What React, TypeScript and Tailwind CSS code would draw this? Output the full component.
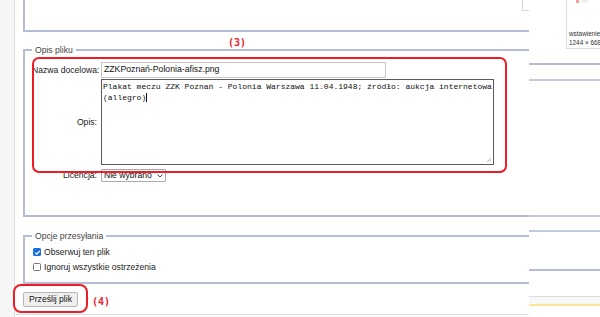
import React from 'react';

const line = 'border-[#b4bdd5]';

const Check: React.FC<{ on?: boolean }> = ({ on }) =>
  on ? (
    <span className="w-[8px] h-[8px] rounded-[1.5px] bg-[#1a6fe0] flex items-center justify-center">
      <svg width="7" height="7" viewBox="0 0 10 10">
        <path d="M1.8 5.2 4 7.4 8.3 2.6" fill="none" stroke="#fff" strokeWidth="1.8" />
      </svg>
    </span>
  ) : (
    <span className="w-[8px] h-[8px] rounded-[1.5px] border border-[#767676] bg-white" />
  );

const App: React.FC = () => {
  return (
    <div className="relative w-[600px] h-[317px] overflow-hidden bg-white flex font-['Liberation_Sans',Arial,sans-serif] text-[#222]">
      {/* lewy pasek */}
      <div className="w-[15px] h-full bg-[#f6f6f6] border-r border-[#dcdcdc]" />

      {/* formularz */}
      <div className="w-[514px] h-[315px] border-b border-[#dedede] overflow-hidden pl-[8px]">
        <div className={`relative w-[530px] h-[32px] border-l-2 border-r-2 border-b-2 ${line}`}>
          <div className="absolute right-[22px] top-0 w-[7px] h-[11px] border-l border-b border-[#d6d6d6] bg-white" />
        </div>

        <fieldset className={`w-[530px] mt-[13px] border-2 ${line} px-[7px] pb-[33px]`}>
          <legend className="px-[3px] text-[8.6px] leading-[10px] text-[#444]">Opis pliku</legend>
          <div className="grid grid-cols-[65px_auto] gap-x-[4px] items-center pt-[7px] text-[8.6px]">
            <span className="text-right whitespace-nowrap">Nazwa docelowa:</span>
            <div className="w-[285px] h-[16px] border border-[#c8c8c8] pl-[2px] flex items-center text-[8.7px] text-[#111]">
              ZZKPoznań-Polonia-afisz.png
            </div>

            <span className="text-right mt-[1px]">Opis:</span>
            <div className="relative mt-[1px] w-[393px] h-[86px] border border-[#5a5a5a] px-[1px] pt-[1px] font-['Liberation_Mono',monospace] text-[8px] leading-[11px] text-[#111]">
              Plakat meczu ZZK Poznań - Polonia Warszawa 11.04.1948; źródło: aukcja internetowa
              <br />
              (allegro)<span className="inline-block w-[1px] h-[9px] bg-[#111] align-middle" />
              <svg className="absolute right-[1px] bottom-[1px]" width="6" height="6" viewBox="0 0 6 6">
                <path d="M1 5 5 1M3 5 5 3" stroke="#aaa" strokeWidth="0.8" />
              </svg>
            </div>

            <span className="text-right mt-[4px]">Licencja:</span>
            <div className="mt-[4px] w-[65px] h-[13px] border border-[#aaa] rounded-[1px] flex items-center justify-between px-[2px] text-[8.6px] text-[#111]">
              Nie wybrano
              <svg width="6" height="4" viewBox="0 0 6 4">
                <path d="M0.5 0.5 3 3 5.5 0.5" fill="none" stroke="#333" strokeWidth="0.9" />
              </svg>
            </div>
          </div>
        </fieldset>

        <fieldset className={`w-[530px] mt-[14px] border-2 ${line} px-[7px] pb-[10px]`}>
          <legend className="px-[3px] text-[8.6px] leading-[10px] text-[#444]">Opcje przesyłania</legend>
          <div className="flex flex-col gap-[5px] pt-[6px] pl-[1px] text-[8.6px] leading-[10px]">
            <label className="flex items-center gap-[3px]">
              <Check on />
              Obserwuj ten plik
            </label>
            <label className="flex items-center gap-[3px]">
              <Check />
              Ignoruj wszystkie ostrzeżenia
            </label>
          </div>
        </fieldset>

        <button className="mt-[8px] w-[55px] h-[15px] border border-[#b5b5b5] rounded-[2px] bg-[#efefef] text-[8.6px] text-[#111] leading-none">
          Prześlij plik
        </button>
      </div>

      {/* prawy panel */}
      <div className="w-[71px] h-full flex flex-col bg-white">
        <div className="h-[49px] flex justify-end">
          <div className="w-[34px] h-[49px] border-l border-b border-[#dcdcdc] flex flex-col pl-[2px] text-[6.4px] leading-[9px] text-[#333] overflow-hidden">
            <div className="flex gap-[3px] h-[4px]">
              <span className="ml-[7px] w-[3px] h-[3px] bg-[#f3a0a0]" />
              <span className="w-[6px] h-[3px] bg-[#eee]" />
            </div>
            <span className="mt-[25px] whitespace-nowrap">wstawienie_</span>
            <span className="whitespace-nowrap">1244 × 668</span>
          </div>
        </div>
        <div className={`h-[16px] border-b-2 ${line}`} />
        <div className="h-[16px] border-b-2 border-[#c3cadf]" />
        <div className="h-[136px] border-b-2 border-[#c3cadf]" />
        <div className="h-[15px] border-b-2 border-[#c3cadf]" />
        <div className={`h-[39px] border-b-2 ${line}`} />
        <div className="h-[25px]" />
        <div className="h-[10px] bg-[#f8f8f8] border-t border-[#dddddd] border-b-2 border-b-[#fce49c]" />
      </div>

      {/* adnotacje */}
      <span className="absolute left-[228px] top-[35px] text-[10px] font-bold text-[#e8202a] font-['DejaVu_Sans_Mono',monospace]">
        (3)
      </span>
      <div className="absolute left-[32px] top-[57px] w-[475px] h-[116px] border-2 border-[#ee1c25] rounded-[7px]" />
      <div className="absolute left-[13px] top-[284px] w-[75px] h-[29px] border-2 border-[#ee1c25] rounded-[8px]" />
      <span className="absolute left-[92px] top-[294px] text-[10px] font-bold text-[#e8202a] font-['DejaVu_Sans_Mono',monospace]">
        (4)
      </span>
    </div>
  );
};

export default App;
